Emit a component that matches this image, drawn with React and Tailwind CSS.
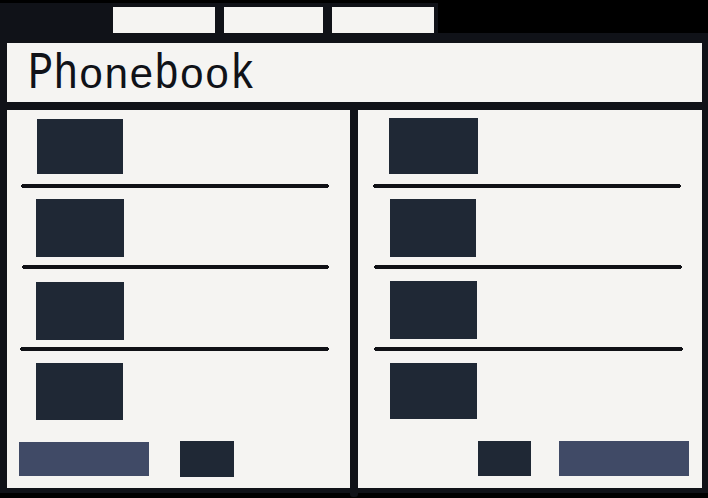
function Rule({ className }) {
  return (
    <div className={`flex h-1 items-center ${className}`}>
      <div className="h-0.5 w-px bg-[#101116]" />
      <div className="h-1 flex-1 bg-[#101116]" />
      <div className="h-0.5 w-px bg-[#101116]" />
    </div>
  );
}

function Photo({ className }) {
  return <div className={`bg-[#1f2835] ${className}`} />;
}

const tall = "inline-block origin-[50%_32px] scale-y-[1.18]";

export default function App() {
  return (
    <div className="h-[498px] w-[708px] overflow-hidden bg-black pt-[3px]">
      <nav className="flex h-[30px] w-[438px] bg-[#101218] pt-1 pl-[113px]">
        <div className="h-[26px] w-[102px] bg-[#f5f4f2]" />
        <div className="ml-[9px] h-[26px] w-[99px] bg-[#f5f4f2]" />
        <div className="ml-[9px] h-[26px] w-[102px] bg-[#f5f4f2]" />
      </nav>
      <div className="h-[460px] bg-[#101218] pt-[10px] pr-[6px] pl-[7px]">
        <header className="h-[59px] bg-[#f5f4f2] pt-[13px] pl-[21px]">
          <h1 className="font-['Liberation_Mono',monospace] text-[42px] leading-[42px] whitespace-nowrap text-[#101218]">
            <span className="inline-block origin-[50%_32px] scale-y-[1.29]">P</span>
            <span className={tall}>h</span>one<span className={tall}>b</span>oo<span className={tall}>k</span>
          </h1>
        </header>
        <main className="mt-2 flex h-[378px] gap-2">
          <section className="h-[378px] w-[343px] bg-[#f5f4f2] pt-[9px]">
            <Photo className="ml-[30px] h-[55px] w-[86px]" />
            <Rule className="mt-[10px] ml-[14px] w-[308px]" />
            <Photo className="mt-[11px] ml-[29px] h-[58px] w-[88px]" />
            <Rule className="mt-2 ml-[15px] w-[307px]" />
            <Photo className="mt-[13px] ml-[29px] h-[58px] w-[88px]" />
            <Rule className="mt-[7px] ml-[13px] w-[309px]" />
            <Photo className="mt-3 ml-[29px] h-[57px] w-[87px]" />
            <div className="mt-[21px] ml-3 flex gap-[31px]">
              <div className="mt-px h-[34px] w-[130px] bg-[#404a66]" />
              <Photo className="h-9 w-[54px]" />
            </div>
          </section>
          <section className="h-[378px] w-[344px] bg-[#f5f4f2] pt-2">
            <Photo className="ml-[31px] h-[56px] w-[89px]" />
            <Rule className="mt-[10px] ml-[15px] w-[308px]" />
            <Photo className="mt-[11px] ml-8 h-[58px] w-[86px]" />
            <Rule className="mt-2 ml-4 w-[308px]" />
            <Photo className="mt-3 ml-8 h-[58px] w-[87px]" />
            <Rule className="mt-2 ml-4 w-[309px]" />
            <Photo className="mt-3 ml-8 h-[56px] w-[87px]" />
            <div className="mt-[22px] ml-[120px] flex gap-7">
              <Photo className="h-[35px] w-[53px]" />
              <div className="h-[35px] w-[130px] bg-[#404a66]" />
            </div>
          </section>
        </main>
      </div>
      <div className="ml-[350px] h-1 w-2 rounded-b-[3px] bg-[#101218]" />
    </div>
  );
}
